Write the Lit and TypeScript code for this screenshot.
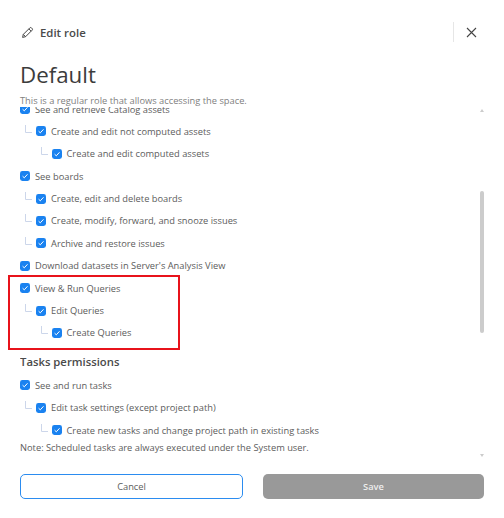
import { LitElement, html, css, svg } from "lit";
import { customElement } from "lit/decorators.js";

type Row = { t: string; l?: number; kind?: "row" | "head" | "note" };
const rows: Row[] = [
  { t: "See and retrieve Catalog assets", l: 0 },
  { t: "Create and edit not computed assets", l: 1 },
  { t: "Create and edit computed assets", l: 2 },
  { t: "See boards", l: 0 },
  { t: "Create, edit and delete boards", l: 1 },
  { t: "Create, modify, forward, and snooze issues", l: 1 },
  { t: "Archive and restore issues", l: 1 },
  { t: "Download datasets in Server's Analysis View", l: 0 },
  { t: "View & Run Queries", l: 0 },
  { t: "Edit Queries", l: 1 },
  { t: "Create Queries", l: 2 },
  { t: "Tasks permissions", kind: "head" },
  { t: "See and run tasks", l: 0 },
  { t: "Edit task settings (except project path)", l: 1 },
  { t: "Create new tasks and change project path in existing tasks", l: 2 },
  { t: "Note: Scheduled tasks are always executed under the System user.", kind: "note" },
];

const check = svg`<svg class="cb" viewBox="0 0 10 10" width="10" height="10"><rect width="10" height="10" rx="2.4" fill="#1a82f0"/><path d="M2.6 5.2 4.3 6.8 7.5 3.3" fill="none" stroke="#fff" stroke-width="1"/></svg>`;
const elbow = svg`<svg class="elbow" viewBox="0 0 7 8" width="7" height="8"><path d="M.5 0V7.5H7" fill="none" stroke="#ccd6ea" stroke-width="1"/></svg>`;

@customElement("app-root")
export class AppRoot extends LitElement {
  static styles = css`
    :host { display: block; position: relative; width: 504px; height: 518px; background: #fff; overflow: hidden;
      font-family: "Open Sans", sans-serif; color: #555; }
    .page { display: flex; flex-direction: column; height: 518px; padding: 0 20px; box-sizing: border-box; }
    .top { display: flex; align-items: center; height: 20px; margin-top: 22px; }
    .icon { margin-left: 1px; }
    .top .name { font-size: 11.4px; font-weight: 600; color: #4a4a4a; margin-left: 6px; flex: 1; }
    .sep { width: 1px; height: 20px; background: #e6e6e6; margin-right: 12px; }
    .close { margin-right: 7px; display: block; }
    h1 { margin: 15px 0 0; font-size: 22.3px; line-height: 36px; font-weight: 400; color: #3c3c3c; }
    .desc { font-size: 9.3px; line-height: 14px; height: 8px; margin-top: 1px; color: #808080; position: relative; z-index: 1; }
    .mid { display: flex; height: 350px; margin-top: 5px; }
    .list { flex: 1; overflow: hidden; min-width: 0; }
    .inner { margin-top: -9.2px; }
    .row { display: flex; align-items: center; height: 22.4px; font-size: 9.3px; color: #5c5c5c; white-space: nowrap; }
    .row .cb { flex: none; margin-right: 5px; }
    .row.l1 { padding-left: 5px; }
    .row.l2 { padding-left: 20.5px; }
    .elbow { flex: none; margin: -5px 4px 0 0; }
    .head { font-size: 11.3px; font-weight: 600; color: #4a4a4a; line-height: 16px; margin: 10px 0 4px; height: 16px; }
    .note { font-size: 9.3px; color: #5c5c5c; line-height: 14px; margin-top: 0; }
    .bar { width: 4px; flex: none; display: flex; flex-direction: column; align-items: center; }
    .arrow { width: 0; height: 0; border-left: 2px solid transparent; border-right: 2px solid transparent; }
    .up { border-bottom: 3px solid #ccc; margin-top: 2px; }
    .down { border-top: 3px solid #ccc; margin-top: auto; }
    .thumb { width: 4px; height: 142px; margin-top: 79px; background: #ccc; border-radius: 2px; }
    .foot { display: flex; gap: 20px; margin-top: 17px; }
    .btn { flex: 1; height: 24.5px; box-sizing: border-box; border-radius: 5px; display: flex; align-items: center; justify-content: center; font-size: 9.3px; }
    .cancel { border: 1.5px solid #2b8cf0; color: #5c5c5c; }
    .save { background: #999; color: #eee; font-weight: 600; }
    .mark { position: absolute; left: 8px; top: 275px; width: 172px; height: 75px; box-sizing: border-box; border: 2px solid #e8131b; pointer-events: none; }
  `;

  render() {
    return html`<div class="page">
      <div class="top">
        <svg class="icon" width="13" height="13" viewBox="0 0 13 13" fill="none" stroke="#444" stroke-width="1"><path d="M1.6 11.4 2.3 8.4 8.8 1.9a1.2 1.2 0 0 1 1.7 0l.6.6a1.2 1.2 0 0 1 0 1.7L4.6 10.7ZM7.8 2.9l2.3 2.3M2.3 8.4l2.3 2.3"/></svg>
        <span class="name">Edit role</span>
        <span class="sep"></span>
        <svg class="close" width="11" height="11" viewBox="0 0 11 11" fill="none" stroke="#444" stroke-width="1.1"><path d="M1 1 10 10M10 1 1 10"/></svg>
      </div>
      <h1>Default</h1>
      <div class="desc">This is a regular role that allows accessing the space.</div>
      <div class="mid">
        <div class="list"><div class="inner">
          ${rows.map((r) =>
            r.kind === "head"
              ? html`<div class="head">${r.t}</div>`
              : r.kind === "note"
              ? html`<div class="note">${r.t}</div>`
              : html`<div class="row l${r.l}">${r.l ? elbow : ""}${check}<span>${r.t}</span></div>`
          )}
        </div></div>
        <div class="bar"><span class="arrow up"></span><span class="thumb"></span><span class="arrow down"></span></div>
      </div>
      <div class="foot">
        <div class="btn cancel">Cancel</div>
        <div class="btn save">Save</div>
      </div>
    </div>
    <div class="mark"></div>`;
  }
}
